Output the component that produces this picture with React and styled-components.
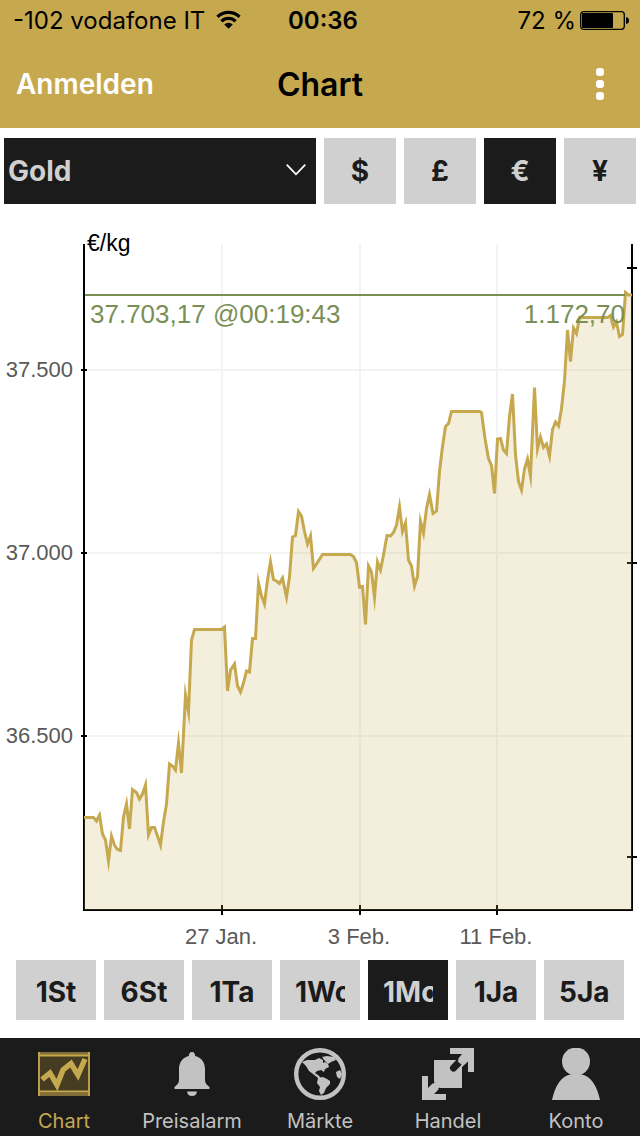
/* eslint-disable react/prop-types */
import React, { useState } from 'react';
import styled, { createGlobalStyle } from 'styled-components';

const GOLD = '#c6a84f';
const DARK = '#1b1b1b';
const LIGHT = '#d0d0d0';

const currencies = ['$', '£', '€', '¥'];
const ranges = ['1St', '6St', '1Ta', '1Wo', '1Mo', '1Ja', '5Ja'];

const series = [
	[84, 817.5], [93.5, 817.5], [96.5, 821], [99.5, 815], [102.5, 834], [105.5, 840],
	[108.5, 861], [111.5, 836], [114.5, 845], [117.5, 849.5], [120.5, 850.5], [123.5, 817],
	[126.5, 804], [129.5, 829], [132.5, 789.5], [136.5, 792.5], [139.5, 799], [142.5, 794],
	[145.5, 785], [148.5, 835], [151.5, 827.5], [154.5, 827.5], [157.5, 836], [160.5, 845],
	[163.5, 822], [166.5, 804], [169.5, 764], [172.5, 766], [175.5, 770], [178.5, 743],
	[181.5, 773], [185.5, 695], [188.5, 712], [191.5, 640], [194.5, 629.5], [221.5, 629.5],
	[224.5, 627], [227.5, 691], [230.5, 670], [234.5, 664], [237.5, 686], [240.5, 692],
	[243.5, 683], [246.5, 671], [249.5, 672], [252.5, 638.5], [255.5, 638.5], [258.5, 583],
	[261.5, 596], [264.5, 604], [267.5, 580], [270.5, 562], [273.5, 579.5], [276.5, 581],
	[279.5, 583.5], [282.5, 578], [286.5, 597], [289.5, 577], [292.5, 537], [295.5, 535.5],
	[298.5, 511.5], [301.5, 516], [304.5, 531.5], [307.5, 544], [310.5, 536], [313.5, 568.5],
	[317.5, 562.5], [322.5, 554.5], [350.5, 554.5], [353.5, 556.5], [356.5, 562.5], [359.5, 587],
	[362.5, 586.5], [365.5, 624.5], [368.5, 566], [371.5, 572], [374.5, 597], [377.5, 562],
	[380.5, 570], [383.5, 555], [387, 535.5], [390.5, 536], [393.5, 532.5], [396.5, 525],
	[399.5, 507], [402.5, 531.5], [405.5, 523], [408.5, 560], [411.5, 566], [414.5, 586],
	[417.5, 576.5], [420.5, 521.5], [423.5, 533], [426.5, 508.5], [429.5, 494.5], [433, 513.5],
	[436.5, 511], [439.5, 471.5], [442.5, 446.5], [445.5, 426.5], [448.5, 423.5], [451.5, 411.5],
	[479.5, 411.5], [481.5, 412.5], [485, 438.5], [488.5, 458.5], [491.5, 465.5], [494.5, 493.5],
	[497.5, 439], [500.5, 438.5], [503.5, 450], [506.5, 453.5], [509.5, 416.5], [512.5, 394],
	[515.5, 455], [518.5, 481.5], [521.5, 490], [524.5, 469], [527.5, 459], [530.5, 476],
	[534.5, 387.5], [537.5, 449], [540.5, 437], [543.5, 447.5], [546.5, 444], [549.5, 456],
	[552.5, 429.5], [555.5, 422], [558.5, 426], [561.5, 408.5], [564.5, 381], [567.5, 330],
	[570.5, 361.5], [573.5, 328], [576.5, 333.5], [579.5, 317.5], [607.5, 317.5], [610.5, 315.5],
	[613.5, 327], [616.5, 322], [619.5, 336.5], [622.5, 334.5], [625.5, 292.5], [628.5, 295],
	[632, 295],
];

const priceTicks = [
	{ y: 370, label: '37.500' },
	{ y: 553, label: '37.000' },
	{ y: 736, label: '36.500' },
];

const dateTicks = [
	{ x: 222, label: '27 Jan.' },
	{ x: 360, label: '3 Feb.' },
	{ x: 497, label: '11 Feb.' },
];

const tabs = [
	{ label: 'Chart', Icon: ChartIcon },
	{ label: 'Preisalarm', Icon: BellIcon },
	{ label: 'Märkte', Icon: GlobeIcon },
	{ label: 'Handel', Icon: TradeIcon },
	{ label: 'Konto', Icon: AccountIcon },
];

function App() {
	const [metal, setMetal] = useState('Gold');
	const [currency, setCurrency] = useState('€');
	const [range, setRange] = useState('1Mo');
	const [tab, setTab] = useState('Chart');

	return (
		<Screen>
			<GlobalStyle />
			<Header>
				<StatusBar>
					<Carrier>
						<span>-102 vodafone IT</span>
						<WifiIcon />
					</Carrier>
					<Clock>00:36</Clock>
					<Battery>
						<span>72 %</span>
						<BatteryIcon />
					</Battery>
				</StatusBar>
				<NavBar>
					<LoginButton type="button">Anmelden</LoginButton>
					<Title>Chart</Title>
					<MenuButton type="button" aria-label="Menü">
						<svg width="8" height="32" viewBox="0 0 8 32" fill="#fff">
							<rect width="8" height="8" rx="3" />
							<rect y="12" width="8" height="8" rx="3" />
							<rect y="24" width="8" height="8" rx="3" />
						</svg>
					</MenuButton>
				</NavBar>
			</Header>
			<Filters>
				<SelectWrap>
					<MetalSelect
						aria-label="Metall"
						value={metal}
						onChange={(e) => setMetal(e.target.value)}
					>
						<option>Gold</option>
						<option>Silber</option>
						<option>Platin</option>
					</MetalSelect>
					<Chevron width="20" height="12" viewBox="0 0 20 12">
						<path d="M.7.7 10 10.3 19.3.7" fill="none" stroke="#fff" strokeWidth="1.8" />
					</Chevron>
				</SelectWrap>
				{currencies.map((item) => (
					<CurrencyButton
						key={item}
						type="button"
						$active={item === currency}
						onClick={() => setCurrency(item)}
					>
						{item}
					</CurrencyButton>
				))}
			</Filters>
			<PriceChart />
			<Ranges>
				{ranges.map((item) => (
					<RangeButton
						key={item}
						type="button"
						$active={item === range}
						onClick={() => setRange(item)}
					>
						<span>{item}</span>
					</RangeButton>
				))}
			</Ranges>
			<TabBar>
				{tabs.map(({ label, Icon }) => (
					<Tab
						key={label}
						type="button"
						$active={label === tab}
						onClick={() => setTab(label)}
					>
						<Icon />
						<span>{label}</span>
					</Tab>
				))}
			</TabBar>
		</Screen>
	);
}

export default App;

function PriceChart() {
	const points = series.map((p) => p.join(',')).join(' ');

	return (
		<ChartSvg viewBox="0 216 640 744" role="img" aria-label="Goldpreis">
			<g stroke="#f3f3f3" strokeWidth="2">
				{priceTicks.map(({ y }) => (
					<line key={y} x1="85" x2="631" y1={y} y2={y} />
				))}
				{dateTicks.map(({ x }) => (
					<line key={x} x1={x} x2={x} y1="244" y2="909" />
				))}
			</g>
			<g stroke="#000" strokeWidth="2" fill="none">
				<path d="M84 244V910H632V244" />
				{priceTicks.map(({ y }) => (
					<line key={y} x1="81" x2="87" y1={y} y2={y} />
				))}
				{dateTicks.map(({ x }) => (
					<line key={x} x1={x} x2={x} y1="905" y2="915" />
				))}
				<path d="M627 268h10M627 563h10M627 857h10" />
			</g>
			<polygon points={`84,910 ${points} 632,910`} fill={GOLD} fillOpacity="0.2" />
			<polyline
				points={points}
				fill="none"
				stroke={GOLD}
				strokeWidth="3"
				strokeMiterlimit="10"
			/>
			<line x1="85" x2="625" y1="295" y2="295" stroke="#7a8f56" strokeWidth="2" />
			<text x="87" y="251" className="unit">€/kg</text>
			<text x="90" y="323" className="quote">37.703,17 @00:19:43</text>
			<text x="625" y="323" textAnchor="end" className="quote">1.172,70</text>
			{priceTicks.map(({ y, label }) => (
				<text key={label} x="73" y={y + 7} textAnchor="end">{label}</text>
			))}
			{dateTicks.map(({ x, label }) => (
				<text key={label} x={x - 1} y="944" textAnchor="middle">{label}</text>
			))}
		</ChartSvg>
	);
}

function WifiIcon() {
	return (
		<svg width="25" height="20" viewBox="0 0 26 20" fill="none" stroke="#000" strokeWidth="3.4">
			<path d="M1.5 6.8a16.600 16.600 0 0 1 23 0" />
			<path d="M5.600 11.300a10.600 10.600 0 0 1 14.800 0" />
			<path d="M13 19 8.600 14.800a6 6 0 0 1 8.800 0z" fill="#000" stroke="none" />
		</svg>
	);
}

function BatteryIcon() {
	return (
		<svg width="49" height="19" viewBox="0 0 49 19">
			<rect x=".7" y=".7" width="43.6" height="17.6" rx="3" fill="none" stroke="#000" strokeWidth="1.3" />
			<rect x="2" y="2" width="31" height="15" rx="1" />
			<path d="M46 6q3 .5 3 3.500t-3 3.500z" />
		</svg>
	);
}

function ChartIcon() {
	return (
		<svg width="52" height="52" viewBox="0 0 52 52">
			<rect y="4" width="52" height="44" fill="#463c22" />
			<path d="M0 5.500H52M0 46.500H52" stroke="#806d38" strokeWidth="3" />
			<path d="M1 4V48M51 4V48M1 7.500H51M1 43.500H51" stroke={GOLD} strokeWidth="1.800" />
			<path d="M4 31.500 12 25 19 37 25 22 33 15.500 40 27 47 11" fill="none" stroke={GOLD} strokeWidth="5.400" />
		</svg>
	);
}

function BellIcon() {
	return (
		<svg width="52" height="52" viewBox="0 0 52 52" fill="#c2c2c2">
			<path d="M26 4c2 0 3 1.500 3.200 4C35.500 9.500 39 14.500 39 21v10c0 4 1 5 4.500 8v2h-35v-2C12 36 13 35 13 31V21c0-6.500 3.500-11.500 9.800-13C23 5.500 24 4 26 4z" />
			<path d="M21 43.500h10c-.5 3-2 4.500-5 4.500s-4.500-1.500-5-4.500z" />
		</svg>
	);
}

function GlobeIcon() {
	return (
		<svg width="52" height="52" viewBox="0 0 52 52" fill="#c2c2c2">
			<circle cx="26" cy="26" r="23.800" fill="none" stroke="#c2c2c2" strokeWidth="4.400" />
			<path d="M8 14 13 12 21 12 25 10 29 12 29 15 31 14 34 16 35 19 31 21 30 24 27 22 23 23 21 25 24 27 27 30 24 30 19 26 15 23 12 18z" />
			<path d="M28 9 33 8 40 9 42 12 37 14 34 16 31 13z" />
			<path d="M24 30 29 29 33 31 36 33 36 36 32 40 30 45 27 47 25 43 26 39 23 35z" />
			<path d="M42 24 46 22 48 26 46 31 43 29z" />
		</svg>
	);
}

function TradeIcon() {
	return (
		<svg width="52" height="52" viewBox="0 0 52 52" fill="#c2c2c2">
			<path d="M12 12H40V40H12z" />
			<path d="M31.500 20 42 9" stroke={DARK} strokeWidth="7" strokeLinecap="round" />
			<path d="M28 0H52V24H46V13.500L40 19 38.500 13 36 11 40 6H28z" />
			<path d="M37 14.500 46 5" stroke="#c2c2c2" strokeWidth="4" />
			<path d="M0 28H6V40L15 31 21 37 12 46H24V52H0z" />
			<path d="M10 33 12 35M17 40 18 42" stroke={DARK} strokeWidth="2" />
		</svg>
	);
}

function AccountIcon() {
	return (
		<svg width="52" height="52" viewBox="0 0 52 52" fill="#c2c2c2">
			<circle cx="26" cy="13.500" r="14" />
			<path d="M2 52C5 37 12 28 20 26.500h12C40 28 47 37 50 52z" />
		</svg>
	);
}

const GlobalStyle = createGlobalStyle`
	* {
		box-sizing: border-box;
	}

	body {
		margin: 0;
		background-color: white;
		font-family: Inter, 'Liberation Sans', sans-serif;
	}

	button,
	select {
		border: 0;
		border-radius: 0;
		padding: 0;
		background: none;
		font-family: inherit;
		cursor: pointer;
	}
`;

const Screen = styled.div`
	display: flex;
	flex-direction: column;
	min-height: 100vh;
`;

const Header = styled.header`
	background-color: ${GOLD};
`;

const StatusBar = styled.div`
	display: grid;
	grid-template-columns: 1fr auto 1fr;
	align-items: center;
	height: 40px;
	padding: 0 11px 0 13px;
	font-size: 24px;
	color: #000;
`;

const Carrier = styled.div`
	display: flex;
	align-items: center;
	gap: 11px;
	white-space: nowrap;
`;

const Clock = styled.span`
	padding-left: 4px;
	font-weight: 600;
	text-align: center;
`;

const Battery = styled.div`
	display: flex;
	align-items: center;
	justify-content: flex-end;
	gap: 4px;
	white-space: nowrap;
`;

const NavBar = styled.nav`
	display: grid;
	grid-template-columns: 1fr auto 1fr;
	align-items: center;
	height: 88px;
	padding: 0 16px;
`;

const LoginButton = styled.button`
	justify-self: start;
	font-size: 28px;
	font-weight: 600;
	color: #fff;
`;

const Title = styled.h1`
	margin: 0;
	font-size: 32px;
	font-weight: 600;
	color: #000;
`;

const MenuButton = styled.button`
	display: flex;
	justify-self: end;
	padding: 0 20px;
`;

const Filters = styled.div`
	display: grid;
	grid-template-columns: 1fr repeat(4, 72px);
	gap: 8px;
	padding: 10px 4px 12px;
`;

const SelectWrap = styled.div`
	position: relative;
	height: 66px;
`;

const MetalSelect = styled.select`
	appearance: none;
	width: 100%;
	height: 100%;
	padding: 0 40px 0 4px;
	background-color: ${DARK};
	font-size: 28px;
	font-weight: 700;
	color: ${LIGHT};
`;

/* lies over the select, which keeps no arrow of its own */
const Chevron = styled.svg`
	position: absolute;
	top: 26px;
	right: 10px;
	pointer-events: none;
`;

const CurrencyButton = styled.button`
	height: 66px;
	background-color: ${({ $active }) => ($active ? DARK : LIGHT)};
	font-size: 28px;
	font-weight: 700;
	color: ${({ $active }) => ($active ? LIGHT : DARK)};
`;

const ChartSvg = styled.svg`
	display: block;
	width: 100%;
	font-family: 'Liberation Sans', Arial, sans-serif;
	font-size: 22px;
	fill: #595959;

	.unit {
		font-size: 23px;
		fill: #000;
	}

	.quote {
		font-size: 26px;
		fill: #7a8f56;
	}
`;

const Ranges = styled.div`
	display: grid;
	grid-template-columns: repeat(7, 1fr);
	gap: 8px;
	padding: 0 16px 18px;
`;

const RangeButton = styled.button`
	min-width: 0;
	height: 60px;
	padding: 4px 15px 0;
	background-color: ${({ $active }) => ($active ? DARK : LIGHT)};
	font-size: 28px;
	font-weight: 700;
	color: ${({ $active }) => ($active ? LIGHT : DARK)};

	span {
		display: block;
		overflow: hidden;
	}
`;

const TabBar = styled.nav`
	display: grid;
	grid-template-columns: repeat(5, 1fr);
	height: 98px;
	margin-top: auto;
	background-color: ${DARK};
`;

const Tab = styled.button`
	display: flex;
	flex-direction: column;
	align-items: center;
	gap: 9px;
	padding-top: 10px;
	font-size: 20px;
	line-height: 24px;
	color: ${({ $active }) => ($active ? GOLD : '#c2c2c2')};
`;
